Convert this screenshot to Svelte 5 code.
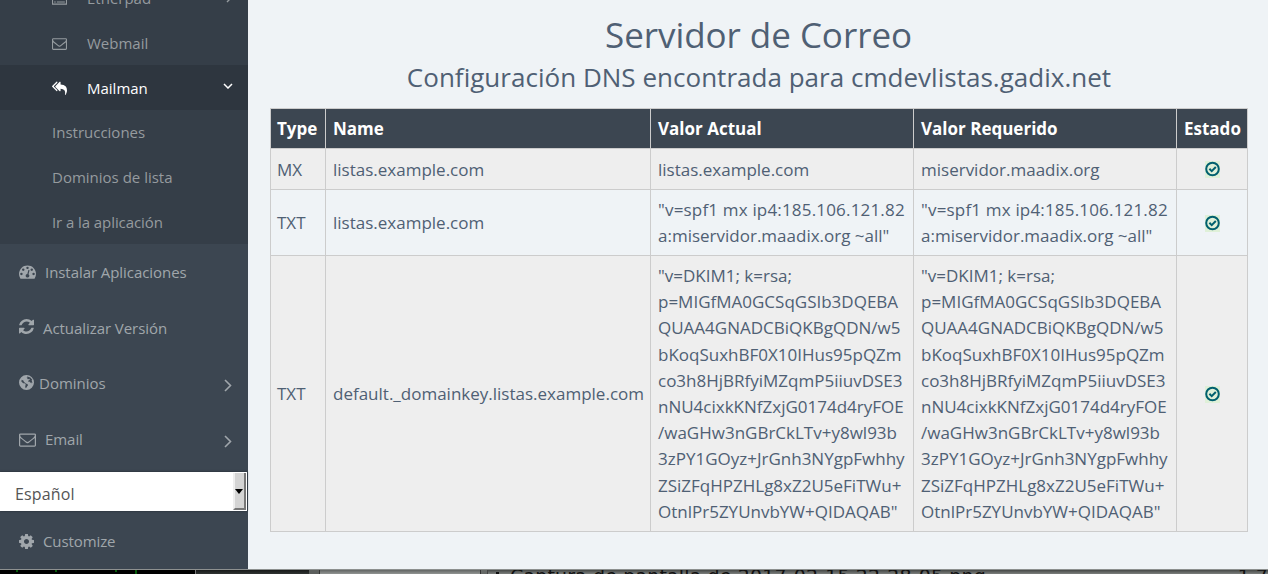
<script>
  const icons = {
    mail: 'M1664 1504v-768q-32 36-69 66-268 206-426 338-51 43-83 67t-86.5 48.5-102.5 24.5h-2q-48 0-102.5-24.5t-86.5-48.5-83-67q-158-132-426-338-37-30-69-66v768q0 13 9.5 22.5t22.5 9.5h1472q13 0 22.5-9.5t9.5-22.5zm0-1051v-24.5l-.5-13-3-12.5-5.5-9-9-7.5-14-2.5h-1472q-13 0-22.5 9.5t-9.5 22.5q0 168 147 284 193 152 401 317 6 5 35 29.5t46 37.5 44.5 31.5 50.5 27.5 43 9h2q20 0 43-9t50.5-27.5 44.5-31.5 46-37.5 35-29.5q208-165 401-317 54-43 100.5-115.5t46.5-131.5zm128-37v1088q0 66-47 113t-113 47h-1472q-66 0-113-47t-47-113v-1088q0-66 47-113t113-47h1472q66 0 113 47t47 113z',
    list: 'M0 160h1792v1472H0zM128 416v1088h1536V416zM256 608h192v128H256zm320 0h960v128H576zM256 928h192v128H256zm320 0h960v128H576zM256 1248h192v128H256zm320 0h960v128H576z',
    replyAll: 'M640 1082v70q0 42-39 59-13 5-25 5-27 0-45-19l-512-512q-19-19-19-45t19-45l512-512q29-31 70-14 39 17 39 59v69l-397 398q-19 19-19 45t19 45zm1152 58q0 58-17 133.5t-38.5 138-48 125-40.5 90.5l-20 40q-8 17-28 17-6 0-9-1-25-8-23-34 43-400-106-565-64-71-170.5-110.5t-267.5-52.5v251q0 42-39 59-13 5-25 5-27 0-45-19l-512-512q-19-19-19-45t19-45l512-512q29-31 70-14 39 17 39 59v262q411 28 599 221 169 173 169 509z',
    gauge: 'M384 1152q0-53-37.5-90.5t-90.5-37.5-90.5 37.5-37.5 90.5 37.5 90.5 90.5 37.5 90.5-37.5 37.5-90.5zm192-448q0-53-37.5-90.5t-90.5-37.5-90.5 37.5-37.5 90.5 37.5 90.5 90.5 37.5 90.5-37.5 37.5-90.5zm428 481l101-382q6-26-7.5-48.5t-38.5-29.5-48 6.5-30 39.5l-101 382q-60 5-107 43.5t-63 98.5q-20 77 20 146t117 89 146-20 89-117q16-60-6-117t-72-91zm660-33q0-53-37.5-90.5t-90.5-37.5-90.5 37.5-37.5 90.5 37.5 90.5 90.5 37.5 90.5-37.5 37.5-90.5zm-640-640q0-53-37.5-90.5t-90.5-37.5-90.5 37.5-37.5 90.5 37.5 90.5 90.5 37.5 90.5-37.5 37.5-90.5zm448 192q0-53-37.5-90.5t-90.5-37.5-90.5 37.5-37.5 90.5 37.5 90.5 90.5 37.5 90.5-37.5 37.5-90.5zm320 448q0 261-141 483-19 29-54 29h-1402q-35 0-54-29-141-221-141-483 0-182 71-348t191-286 286-191 348-71 348 71 286 191 191 286 71 348z',
    refresh: 'M1639 1056q0 5-1 7-64 268-268 434.5t-478 166.5q-146 0-282.5-55t-243.5-157l-129 129q-19 19-45 19t-45-19-19-45v-448q0-26 19-45t45-19h448q26 0 45 19t19 45-19 45l-137 137q71 66 161 102t187 36q134 0 250-65t186-179q11-17 53-117 8-23 30-23h192q13 0 22.5 9.5t9.5 22.5zm25-800v448q0 26-19 45t-45 19h-448q-26 0-45-19t-19-45 19-45l138-138q-148-137-349-137-134 0-250 65t-186 179q-11 17-53 117-8 23-30 23h-199q-13 0-22.5-9.5t-9.5-22.5v-7q65-268 270-434.5t480-166.5q146 0 284 55.5t245 156.5l130-129q19-19 45-19t45 19 19 45z',
    globe: 'M896 128a768 768 0 1 1 0 1536a768 768 0 1 1 0-1536zM1000 270L900 360L1020 400L960 540L1090 570L1180 500L1250 600L1100 700L1050 830L1180 800L1300 930L1410 860L1400 1010L1500 900L1420 700L1490 620A650 650 0 0 0 1000 270zM400 620L370 800L560 960L700 960L830 1120L760 1260L800 1480L900 1420L980 1260L1060 1180L980 1060L800 1010L700 880L590 850L640 760L560 700z',
    cog: 'M1152 896q0-106-75-181t-181-75-181 75-75 181 75 181 181 75 181-75 75-181zm512-109v222q0 12-8 23t-20 13l-185 28q-19 54-39 91 35 50 107 138 10 12 10 25t-9 23q-27 37-99 108t-94 71q-12 0-26-9l-138-108q-44 23-91 38-16 136-29 186-7 28-36 28h-222q-14 0-24.5-8.5t-11.5-21.5l-28-184q-49-16-90-37l-141 107q-10 9-25 9-14 0-25-11-126-114-165-168-7-10-7-23 0-12 8-23 15-21 51-66.5t54-70.5q-27-50-41-99l-183-27q-13-2-21-12.5t-8-23.5v-222q0-12 8-23t19-13l186-28q14-46 39-92-40-57-107-138-10-12-10-24 0-10 9-23 26-36 98.5-107.5t94.5-71.5q13 0 26 10l138 107q44-23 91-38 16-136 29-186 7-28 36-28h222q14 0 24.5 8.5t11.5 21.5l28 184q49 16 90 37l142-107q9-9 24-9 13 0 25 10 129 119 165 170 7 8 7 22 0 12-8 23-15 21-51 66.5t-54 70.5q26 50 41 98l183 28q13 2 21 12.5t8 23.5z'
  };

  const spf = ['"v=spf1 mx ip4:185.106.121.82', 'a:miservidor.maadix.org ~all"'];
  const dkim = [
    '"v=DKIM1; k=rsa;',
    'p=MIGfMA0GCSqGSIb3DQEBA',
    'QUAA4GNADCBiQKBgQDN/w5',
    'bKoqSuxhBF0X10IHus95pQZm',
    'co3h8HjBRfyiMZqmP5iiuvDSE3',
    'nNU4cixkKNfZxjG0174d4ryFOE',
    '/waGHw3nGBrCkLTv+y8wl93b',
    '3zPY1GOyz+JrGnh3NYgpFwhhy',
    'ZSiZFqHPZHLg8xZ2U5eFiTWu+',
    'OtnlPr5ZYUnvbYW+QIDAQAB"'
  ];
  const records = [
    { type: 'MX', name: 'listas.example.com', actual: ['listas.example.com'], required: ['miservidor.maadix.org'], height: 41 },
    { type: 'TXT', name: 'listas.example.com', actual: spf, required: spf, height: 66 },
    { type: 'TXT', name: 'default._domainkey.listas.example.com', actual: dkim, required: dkim, height: 276 }
  ];
</script>

{#snippet icon(name, wide = false)}
  <svg class="icon" class:wide={name === 'gauge' || wide} viewBox={name === 'globe' || name === 'refresh' || name === 'cog' ? '128 128 1536 1536' : '0 0 1792 1792'}>
    <path d={icons[name]} fill="currentColor" fill-rule={name === 'globe' || name === 'list' ? 'evenodd' : 'nonzero'} />
  </svg>
{/snippet}

{#snippet chevron()}
  <svg class="chevron" viewBox="0 0 8 13"><path d="M1 1l5.5 5.5L1 12" fill="none" stroke="currentColor" stroke-width="1.6" /></svg>
{/snippet}

<div class="screen">
  <div class="page">
    <nav>
      <div class="submenu">
        <div class="app etherpad">{@render icon('list')}<span>Etherpad</span>
          <svg class="small-chevron" viewBox="0 0 6 10"><path d="M1 1l4 4-4 4" fill="none" stroke="currentColor" stroke-width="1.4" /></svg>
        </div>
        <div class="app">{@render icon('mail')}<span>Webmail</span></div>
        <div class="app active">{@render icon('replyAll')}<span>Mailman</span>
          <svg class="down" viewBox="0 0 10 6"><path d="M1 1l4 4 4-4" fill="none" stroke="currentColor" stroke-width="1.5" /></svg>
        </div>
        <div class="sub">Instrucciones</div>
        <div class="sub">Dominios de lista</div>
        <div class="sub last">Ir a la aplicación</div>
      </div>
      <div class="item install">{@render icon('gauge')}<span>Instalar Aplicaciones</span></div>
      <div class="item update">{@render icon('refresh')}<span>Actualizar Versión</span></div>
      <div class="item domains">{@render icon('globe')}<span>Dominios</span>{@render chevron()}</div>
      <div class="item email">{@render icon('mail', true)}<span>Email</span>{@render chevron()}</div>
      <div class="language"><span>Español</span><i><b></b></i></div>
      <div class="item customize">{@render icon('cog')}<span>Customize</span></div>
    </nav>

    <main>
      <h1>Servidor de Correo</h1>
      <h2>Configuración DNS encontrada para cmdevlistas.gadix.net</h2>
      <table>
        <colgroup><col class="c-type" /><col class="c-name" /><col class="c-value" /><col class="c-value" /><col class="c-state" /></colgroup>
        <thead>
          <tr><th>Type</th><th>Name</th><th>Valor Actual</th><th>Valor Requerido</th><th>Estado</th></tr>
        </thead>
        <tbody>
          {#each records as record}
            <tr class:single={record.type === 'MX'} style:height="{record.height}px">
              <td>{record.type}</td>
              <td>{record.name}</td>
              <td>{#each record.actual as line}<div class:loose={line.includes('ip4')}>{line}</div>{/each}</td>
              <td>{#each record.required as line}<div class:loose={line.includes('ip4')}>{line}</div>{/each}</td>
              <td class="state">
                <svg viewBox="0 0 15 17"><rect width="15" height="17" fill="#dff0d8" /><circle cx="7.5" cy="8" r="6.3" fill="none" stroke="#00606e" stroke-width="2" /><path d="M4.4 7.8l2.3 2.3 4.1-4.1" fill="none" stroke="#00606e" stroke-width="2" /></svg>
              </td>
            </tr>
          {/each}
        </tbody>
      </table>
    </main>
  </div>

  <div class="desktop">
    <div class="terminal"><i></i><i></i><i></i><i class="tall"></i></div>
    <div class="dark"></div>
    <div class="gutter"></div>
    <div class="panel"></div>
    <div class="files"><span class="bullet"></span><span class="file">Captura de pantalla de 2017-02-15 22-28-05.png</span><span class="size">1,78</span></div>
  </div>
</div>

<style>
  :global(body) { margin: 0; overflow: hidden; }
  .screen { width: 1268px; height: 574px; overflow: hidden; display: flex; flex-direction: column; font-family: "Open Sans", sans-serif; color: #4f6074; background: #eff3f6; }
  .page { height: 569px; flex: none; display: flex; overflow: hidden; }
  nav { width: 248px; flex: none; background: #3c4651; color: #a0a6ab; font-size: 15px; line-height: 20px; display: flex; flex-direction: column; }
  .submenu { height: 244px; flex: none; background: #353e48; color: #959b9f; overflow: hidden; }
  .app { height: 45px; box-sizing: border-box; padding-left: 52px; display: flex; align-items: center; }
  .app span { margin-left: 20px; }
  .app.etherpad { margin-top: -25px; }
  .app.active { background: #2e363f; color: #fff; }
  .app .icon { width: 15px; height: 15px; margin-top: 1px; }
  .small-chevron { width: 6px; height: 10px; margin-left: auto; margin-right: 16px; }
  .down { width: 10px; height: 6px; margin-left: auto; margin-right: 15px; margin-top: -3px; }
  .sub { height: 45px; line-height: 45px; padding-left: 52px; letter-spacing: -0.04px; }
  .sub:not(.last) { letter-spacing: 0; }
  .sub.last { letter-spacing: -0.08px; }
  .icon { flex: none; width: 15px; height: 15px; display: block; }
  .icon.wide { width: 17px; height: 17px; }
  .item { box-sizing: border-box; padding-left: 19px; display: flex; align-items: center; flex: none; letter-spacing: -0.06px; }
  .install { height: 57px; padding-bottom: 2px; }
  .install span { margin-left: 9px; }
  .update { height: 55px; padding-bottom: 2px; }
  .update span { margin-left: 9px; }
  .update .icon { margin-top: -2px; }
  .domains { height: 56px; padding-bottom: 2px; letter-spacing: 0; }
  .domains span { margin-left: 5px; }
  .domains .icon { margin-top: -1px; }
  .email { height: 60px; padding-bottom: 6px; }
  .email span { margin-left: 9px; }
  .email .icon { margin-top: 0; }
  .chevron { width: 8px; height: 13px; margin-left: auto; margin-right: 16px; margin-top: 5px; }
  .email .chevron { margin-top: 4px; }
  .language { height: 39px; flex: none; background: #fff; box-shadow: 0 0 2px #20262c; color: #555; font-size: 16px; line-height: 45px; letter-spacing: 0.15px; padding-left: 15px; margin-right: 1px; display: flex; justify-content: space-between; }
  .language i { width: 9px; height: 35px; margin-top: 1px; background: #d4d4d4; border-left: 2px solid #eee; border-right: 2px solid #777; border-bottom: 2px solid #777; margin-right: 1px; display: flex; align-items: center; justify-content: center; }
  .language b { border: 4px solid transparent; border-top: 5px solid #000; border-bottom: 0; margin: 2px 1px 0 0; }
  .customize { height: 58px; padding-top: 2px; letter-spacing: -0.1px; }
  .customize span { margin-left: 9px; }
  main { flex: 1; padding: 10px 20px 0 22px; }
  h1, h2 { margin: 0; font-weight: 400; text-align: center; white-space: nowrap; }
  h1 { font-size: 35px; line-height: 50px; letter-spacing: -0.05px; margin-left: -1px; }
  h2 { font-size: 26px; line-height: 34px; margin-bottom: 14px; letter-spacing: 0.02px; }
  table { width: 978px; table-layout: fixed; border-collapse: collapse; font-size: 17px; line-height: 26.18px; }
  .c-type { width: 55px; }
  .c-name { width: 325px; }
  .c-value { width: 263px; }
  .c-state { width: 71px; }
  th, td { box-sizing: border-box; border: 1px solid #ccc; padding: 1px 0 0 7px; text-align: left; white-space: nowrap; }
  th:first-child, td:first-child { padding-left: 6px; }
  th { height: 40px; background: #3c4651; color: #fff; font-size: 17px; font-weight: 700; line-height: 26px; }
  tbody tr:nth-child(odd) { background: #eee; }
  .single td { padding-top: 2px; }
  .loose { letter-spacing: 0.18px; }
  tbody .state { padding: 2px 0 0; text-align: center; }
  tbody .single .state { padding: 0; }
  .state svg { width: 15px; height: 17px; display: block; margin: 0 auto; }
  .desktop { height: 5px; box-sizing: border-box; border-top: 1px solid #8d908f; display: flex; background: #666967; overflow: hidden; }
  .terminal { width: 195px; background: #000; display: flex; gap: 37px; padding-left: 16px; box-sizing: border-box; }
  .terminal i { width: 2px; height: 2px; background: #075b0b; }
  .terminal i:nth-child(3) { margin-left: 21px; }
  .terminal i.tall { margin-left: -19px; height: 4px; }
  .dark { width: 113px; background: linear-gradient(#171919, #303432); border-left: 1px solid #777; }
  .gutter { width: 10px; background: #5c5f5d; border-right: 1px solid #333; }
  .panel { width: 160px; background: linear-gradient(#626563, #929593); border-right: 1px solid #333; }
  .files { flex: 1; border-left: 1px solid #444; margin-left: 6px; display: flex; background: linear-gradient(#454846, #7d807e); color: #111; font: 19px/22px "DejaVu Sans", sans-serif; white-space: nowrap; }
  .bullet { width: 3px; height: 3px; margin: 2px 11px 0 8px; background: #111; }
  .file, .size { margin-top: -5px; }
  .file { letter-spacing: 0.14px; }
  .size { margin-left: auto; margin-right: -12px; }
</style>
